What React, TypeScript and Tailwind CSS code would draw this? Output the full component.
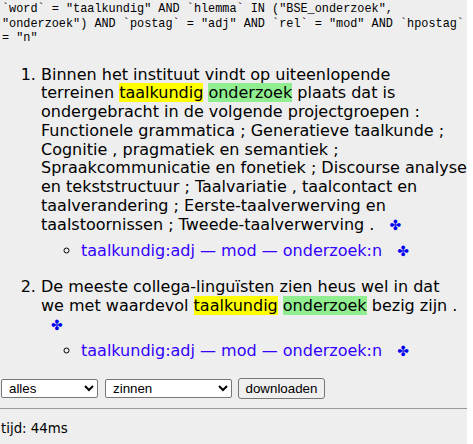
import React from "react";

const hits = [
  {
    before: "Binnen het instituut vindt op uiteenlopende terreinen ",
    after:
      " plaats dat is ondergebracht in de volgende projectgroepen : Functionele grammatica ; Generatieve taalkunde ; Cognitie , pragmatiek en semantiek ; Spraakcommunicatie en fonetiek ; Discourse analyse en tekststructuur ; Taalvariatie , taalcontact en taalverandering ; Eerste-taalverwerving en taalstoornissen ; Tweede-taalverwerving .",
  },
  {
    before: "De meeste collega-linguïsten zien heus wel in dat we met waardevol ",
    after: " bezig zijn .",
  },
];

const Plus: React.FC = () => (
  <span className="ml-[10px] inline-block leading-[18.75px] text-[#0000ee] text-[14px] cursor-pointer">✤</span>
);

const App: React.FC = () => {
  return (
    <div className="w-[467px] bg-[#eeeeee] pl-[1px] pt-[2px] text-black font-['DejaVu_Sans',sans-serif]">
      <div className="font-['Liberation_Mono',monospace] text-[11.85px] leading-[14.5px] whitespace-pre-wrap break-words pl-[1px]">
        `word` = "taalkundig" AND `hlemma` IN ("BSE_onderzoek", "onderzoek") AND `postag` = "adj" AND `rel` = "mod" AND `hpostag` = "n"
      </div>
      <ol className="list-decimal pl-[40px] mt-[20px] mb-[16px] text-[16px] leading-[18.75px]">
        {hits.map((h, i) => (
          <li key={i} className="mb-[17px]">
            {h.before}
            <span className="bg-[#ffff00]">taalkundig</span>{" "}
            <span className="bg-[#90ee90]">onderzoek</span>
            {h.after} <Plus />
            <ul className="list-[circle] pl-[40px] mt-[8px]">
              <li>
                <span className="text-[#3300ff] cursor-pointer">taalkundig:adj — mod — onderzoek:n</span> <Plus />
              </li>
            </ul>
          </li>
        ))}
      </ol>
      <div className="flex items-center h-[21px] font-['Liberation_Sans',sans-serif] text-[13.33px]">
        <select className="w-[97px] h-[19px] border border-[#767676] rounded-[2px] bg-white pl-[3px]">
          <option>alles</option>
        </select>
        <select className="ml-[7px] w-[127px] h-[19px] border border-[#767676] rounded-[2px] bg-white pl-[3px]">
          <option>zinnen</option>
        </select>
        <button className="ml-[6px] w-[87px] h-[21px] border border-[#767676] rounded-[3px] bg-[#efefef] px-[6px]">
          downloaden
        </button>
      </div>
      <hr className="mt-[9px] -ml-[1px] border-t border-[#999999]" />
      <div className="mt-[12px] pb-[8px] text-[13.33px] leading-[15.5px]">tijd: 44ms</div>
    </div>
  );
};

export default App;
